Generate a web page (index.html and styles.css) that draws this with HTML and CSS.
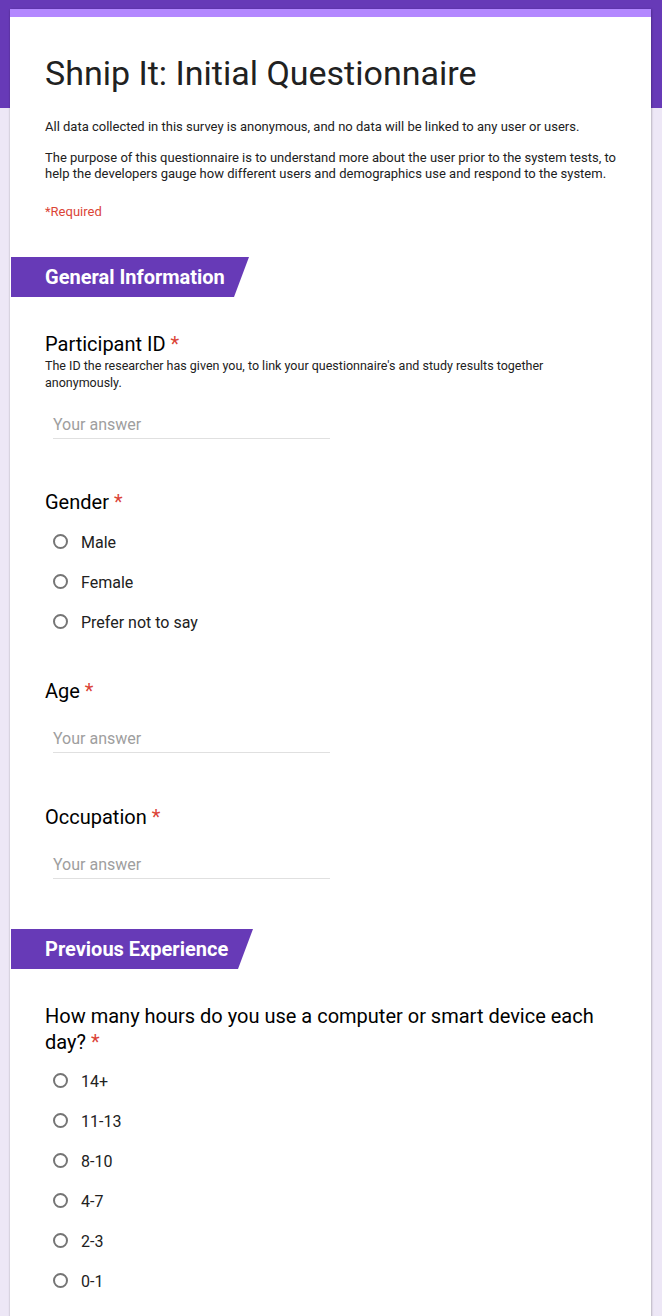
FILE: index.html
```html
<!DOCTYPE html>
<html lang="en">
<head>
<meta charset="utf-8">
<title>Shnip It: Initial Questionnaire</title>
<link rel="stylesheet" href="styles.css">
</head>
<body>
<div class="page">
  <div class="card">
    <div class="intro">
      <h1 class="title">Shnip It: Initial Questionnaire</h1>
      <p class="desc first">All data collected in this survey is anonymous, and no data will be linked to any user or users.</p>
      <p class="desc second">The purpose of this questionnaire is to understand more about the user prior to the system tests, to help the developers gauge how different users and demographics use and respond to the system.</p>
      <p class="required-note">*Required</p>
    </div>

    <div class="section-head first-section"><span>General Information</span></div>

    <div class="question q-first">
      <div class="q-title">Participant ID <span class="star">*</span></div>
      <div class="q-desc">The ID the researcher has given you, to link your questionnaire's and study results together anonymously.</div>
      <div class="answer">Your answer</div>
    </div>

    <div class="question q-after-input">
      <div class="q-title">Gender <span class="star">*</span></div>
      <div class="options options-gender">
        <div class="option"><span class="radio"></span><span class="opt-label">Male</span></div>
        <div class="option"><span class="radio"></span><span class="opt-label">Female</span></div>
        <div class="option"><span class="radio"></span><span class="opt-label">Prefer not to say</span></div>
      </div>
    </div>

    <div class="question q-after-options">
      <div class="q-title">Age <span class="star">*</span></div>
      <div class="answer answer-gap">Your answer</div>
    </div>

    <div class="question q-after-input-wide">
      <div class="q-title">Occupation <span class="star">*</span></div>
      <div class="answer answer-gap">Your answer</div>
    </div>

    <div class="section-head second-section"><span>Previous Experience</span></div>

    <div class="question q-first">
      <div class="q-title">How many hours do you use a computer or smart device each day? <span class="star">*</span></div>
      <div class="options">
        <div class="option"><span class="radio"></span><span class="opt-label">14+</span></div>
        <div class="option"><span class="radio"></span><span class="opt-label">11-13</span></div>
        <div class="option"><span class="radio"></span><span class="opt-label">8-10</span></div>
        <div class="option"><span class="radio"></span><span class="opt-label">4-7</span></div>
        <div class="option"><span class="radio"></span><span class="opt-label">2-3</span></div>
        <div class="option"><span class="radio"></span><span class="opt-label">0-1</span></div>
      </div>
    </div>
  </div>
</div>
</body>
</html>
```

FILE: styles.css
```css
html, body {
  margin: 0;
  padding: 0;
}

body {
  font-family: Roboto, "Liberation Sans", Arial, sans-serif;
  color: #202124;
  background: linear-gradient(to bottom, #673ab7 0, #673ab7 108px, #ede7f6 108px, #ede7f6 100%);
  min-height: 1316px;
}

.page {
  padding: 9px 11px 0 10px;
}

.card {
  background: #fff;
  border-top: 8px solid #b388ff;
  box-shadow: 0 1px 2px rgba(0,0,0,0.25), 1px 0 2px rgba(0,0,0,0.12);
  min-height: 1300px;
  padding-bottom: 40px;
}

.intro {
  padding: 0 35px;
}

.title {
  margin: 36px 0 0;
  font-size: 34px;
  line-height: 40px;
  font-weight: 400;
  color: #212121;
}

.desc {
  margin: 0;
  font-size: 13px;
  line-height: 16px;
  color: #212121;
}

.desc.first {
  margin-top: 26px;
}

.desc.second {
  margin-top: 15px;
}

.required-note {
  margin: 22px 0 0;
  font-size: 13px;
  line-height: 16px;
  color: #db4437;
}

.section-head {
  height: 40px;
  margin-left: 1px;
  display: flex;
  align-items: center;
}

.section-head span {
  display: flex;
  align-items: center;
  height: 40px;
  background: #673ab7;
  color: #fff;
  font-size: 20px;
  font-weight: 700;
  padding-left: 34px;
  box-sizing: border-box;
}

.first-section {
  margin-top: 37px;
}

.first-section span {
  width: 238px;
  clip-path: polygon(0 0, 100% 0, calc(100% - 15px) 100%, 0 100%);
}

.second-section {
  margin-top: 50px;
}

.second-section span {
  width: 242px;
  clip-path: polygon(0 0, 100% 0, calc(100% - 15px) 100%, 0 100%);
}

.question {
  padding: 0 35px;
}

.q-first {
  margin-top: 34px;
}

.q-after-input {
  margin-top: 50px;
}

.q-after-input-wide {
  margin-top: 51px;
}

.q-after-options {
  margin-top: 35px;
}

.q-title {
  font-size: 20px;
  line-height: 26px;
  color: #000;
  padding-right: 10px;
}

.star {
  color: #db4437;
}

.q-desc {
  font-size: 12.5px;
  line-height: 17px;
  color: #212121;
}

.answer {
  margin: 22px 0 0 8px;
  width: 277px;
  font-size: 16px;
  line-height: 24px;
  color: #9e9e9e;
  padding-bottom: 1px;
  border-bottom: 1px solid #e0e0e0;
}

.answer-gap {
  margin-top: 23px;
}

.options {
  margin-top: 7px;
  padding-left: 8px;
}

.options-gender {
  margin-top: 8px;
}

.option {
  display: flex;
  align-items: center;
  height: 40px;
}

.radio {
  width: 15px;
  height: 15px;
  box-sizing: border-box;
  border: 2px solid #757575;
  border-radius: 50%;
  margin-right: 13px;
  margin-top: -3px;
}

.opt-label {
  font-size: 16px;
  line-height: 20px;
  color: #212121;
}
```
